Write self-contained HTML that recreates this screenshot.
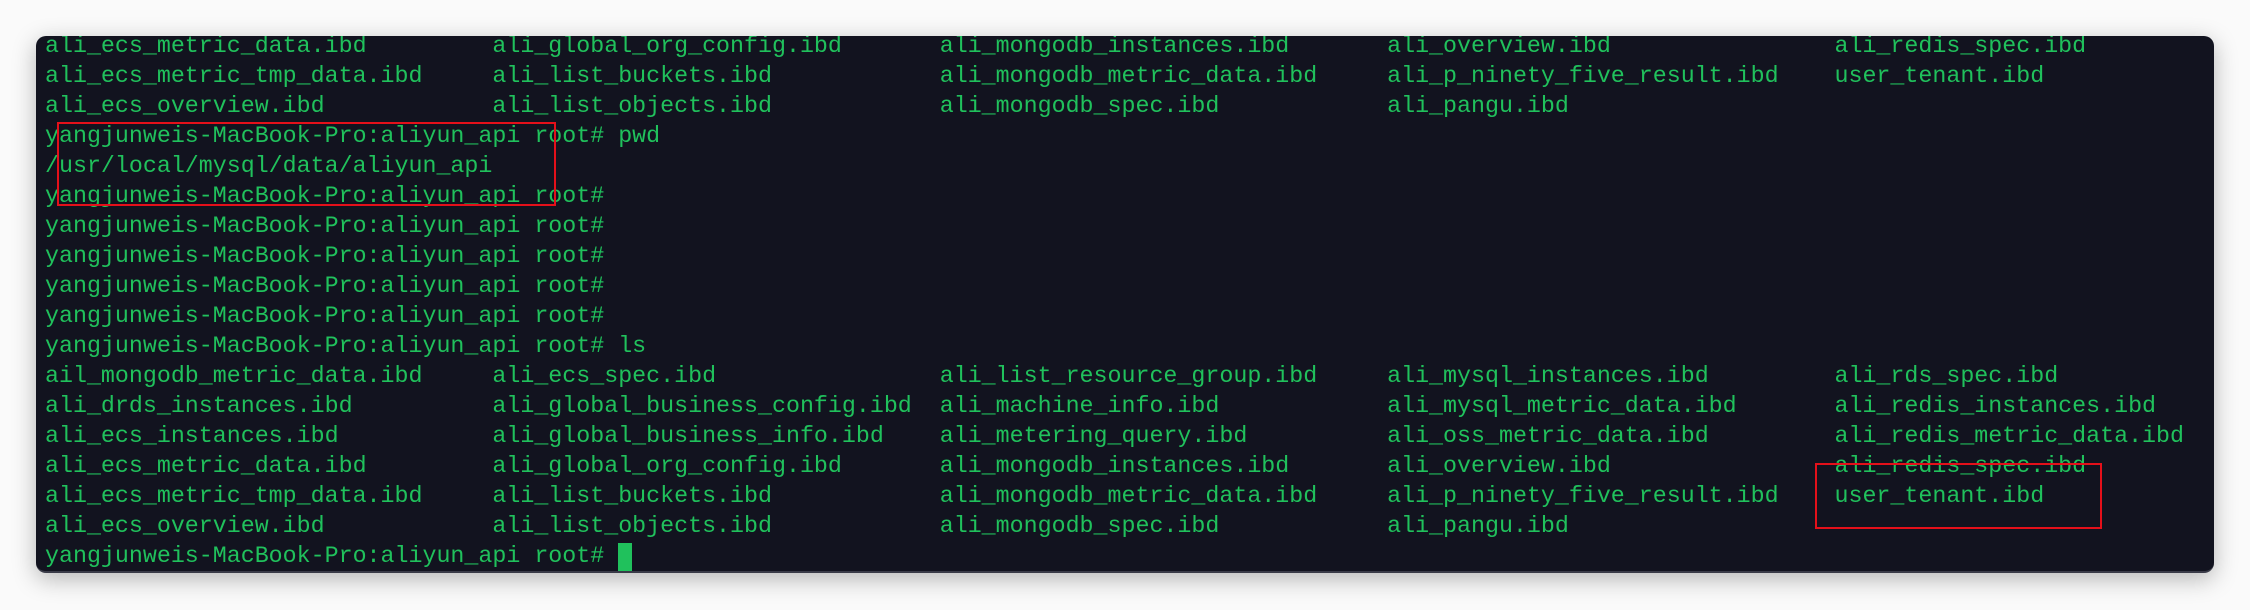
<!DOCTYPE html>
<html><head><meta charset="utf-8"><style>
html,body{margin:0;padding:0;width:2250px;height:610px;background:#fafafa;overflow:hidden}
.term{position:absolute;left:36px;top:36px;width:2178px;height:535px;background:#12131f;border-radius:10px;overflow:hidden;box-shadow:0 6px 24px rgba(0,0,0,.28);border-bottom:2px solid #3a3b48}
.l{position:absolute;left:9px;height:30px;line-height:30px;font-family:"Liberation Mono",monospace;font-size:23.3px;color:#20c15c;white-space:pre}
.box{position:absolute;border:2px solid #e4101a}
.cur{position:absolute;left:582px;top:507px;width:14px;height:28px;background:#20c15c}
</style></head><body>
<div class="term">
<div class="l" style="top:-5px">ali_ecs_metric_data.ibd         ali_global_org_config.ibd       ali_mongodb_instances.ibd       ali_overview.ibd                ali_redis_spec.ibd</div>
<div class="l" style="top:25px">ali_ecs_metric_tmp_data.ibd     ali_list_buckets.ibd            ali_mongodb_metric_data.ibd     ali_p_ninety_five_result.ibd    user_tenant.ibd</div>
<div class="l" style="top:55px">ali_ecs_overview.ibd            ali_list_objects.ibd            ali_mongodb_spec.ibd            ali_pangu.ibd</div>
<div class="l" style="top:85px">yangjunweis-MacBook-Pro:aliyun_api root# pwd</div>
<div class="l" style="top:115px">/usr/local/mysql/data/aliyun_api</div>
<div class="l" style="top:145px">yangjunweis-MacBook-Pro:aliyun_api root#</div>
<div class="l" style="top:175px">yangjunweis-MacBook-Pro:aliyun_api root#</div>
<div class="l" style="top:205px">yangjunweis-MacBook-Pro:aliyun_api root#</div>
<div class="l" style="top:235px">yangjunweis-MacBook-Pro:aliyun_api root#</div>
<div class="l" style="top:265px">yangjunweis-MacBook-Pro:aliyun_api root#</div>
<div class="l" style="top:295px">yangjunweis-MacBook-Pro:aliyun_api root# ls</div>
<div class="l" style="top:325px">ail_mongodb_metric_data.ibd     ali_ecs_spec.ibd                ali_list_resource_group.ibd     ali_mysql_instances.ibd         ali_rds_spec.ibd</div>
<div class="l" style="top:355px">ali_drds_instances.ibd          ali_global_business_config.ibd  ali_machine_info.ibd            ali_mysql_metric_data.ibd       ali_redis_instances.ibd</div>
<div class="l" style="top:385px">ali_ecs_instances.ibd           ali_global_business_info.ibd    ali_metering_query.ibd          ali_oss_metric_data.ibd         ali_redis_metric_data.ibd</div>
<div class="l" style="top:415px">ali_ecs_metric_data.ibd         ali_global_org_config.ibd       ali_mongodb_instances.ibd       ali_overview.ibd                ali_redis_spec.ibd</div>
<div class="l" style="top:445px">ali_ecs_metric_tmp_data.ibd     ali_list_buckets.ibd            ali_mongodb_metric_data.ibd     ali_p_ninety_five_result.ibd    user_tenant.ibd</div>
<div class="l" style="top:475px">ali_ecs_overview.ibd            ali_list_objects.ibd            ali_mongodb_spec.ibd            ali_pangu.ibd</div>
<div class="l" style="top:505px">yangjunweis-MacBook-Pro:aliyun_api root# </div>
<div class="cur"></div>
<div class="box" style="left:21px;top:86px;width:495px;height:80px"></div>
<div class="box" style="left:1779px;top:427px;width:283px;height:62px"></div>
</div>
</body></html>
